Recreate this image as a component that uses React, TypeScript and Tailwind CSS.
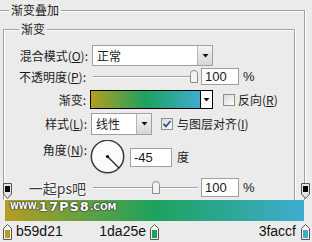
import React from "react";

function Arrow() {
  return (
    <svg width="7" height="4" viewBox="0 0 7 4">
      <polygon points="0.5,0 6.5,0 3.5,3.5" fill="#111" />
    </svg>
  );
}

function ArrowBtn() {
  return (
    <div className="w-[15px] h-full flex items-center justify-center border-l border-[#b4b4b4] bg-[linear-gradient(to_bottom,#f4f4f4,#d6d6d6)]">
      <Arrow />
    </div>
  );
}

function Thumb() {
  return (
    <svg width="8" height="13" viewBox="0 0 8 13">
      <path d="M0.5 3.5 Q0.5 0.5 4 0.5 Q7.5 0.5 7.5 3.5 V12.5 H0.5 Z" fill="#f3f3f3" stroke="#8c8c8c" />
    </svg>
  );
}

function Slider({ thumbLeft }: { thumbLeft: string }) {
  return (
    <div className="relative w-[106px] h-full">
      <div className="absolute left-[1px] right-0 top-[8px] h-[1px] bg-[#a0a0a0]" />
      <div className="absolute left-[1px] right-0 top-[9px] h-[1px] bg-white" />
      <div className={"absolute top-[2px] " + thumbLeft}>
        <Thumb />
      </div>
    </div>
  );
}

function CheckBox({ checked }: { checked?: boolean }) {
  return (
    <div className="w-[12px] h-[12px] border border-[#8e8f8f] bg-[linear-gradient(135deg,#d8d8d8,#ffffff)] flex items-center justify-center">
      {checked && (
        <svg width="10" height="10" viewBox="0 0 10 10">
          <path d="M1.5 5 L4 7.5 L8.5 2" fill="none" stroke="#34508a" strokeWidth="1.8" />
        </svg>
      )}
    </div>
  );
}

function OpacityStop() {
  return (
    <svg width="9" height="16" viewBox="0 0 9 16">
      <path d="M0.5 0.5 H8.5 V11 L4.5 15.5 L0.5 11 Z" fill="#e4e4e4" stroke="#555" />
      <rect x="2" y="3" width="5" height="6" fill="#000" />
    </svg>
  );
}

function ColorStop({ color }: { color: string }) {
  return (
    <svg width="9" height="16" viewBox="0 0 9 16">
      <path d="M4.5 0.5 L8.5 4.5 V15.5 H0.5 V4.5 Z" fill="#f6f6f6" stroke="#555" />
      <rect x="2" y="6" width="5" height="8" fill={color} />
    </svg>
  );
}

export default function App() {
  const num = "font-['Liberation_Sans',Arial,sans-serif]";
  return (
    <div className="relative w-[312px] h-[242px] overflow-hidden bg-[#ebebeb] text-[12px] leading-[14px] text-[#1c1c1c] font-['Noto_Sans_CJK_SC','Noto_Sans',sans-serif]">
      {/* outer group */}
      <div className="relative mt-[10px] ml-[-2px] w-[307px] h-[190px] border-t border-l border-r border-[#a0a0a0] shadow-[inset_1px_1px_0_#fff,1px_0_0_#fff]">
        <div className="absolute top-[-8px] left-[10px] px-[2px] bg-[#ebebeb] leading-[14px]">渐变叠加</div>
        {/* inner group */}
        <div className="relative mt-[18px] ml-[4px] w-[292px] h-[171px] border-t border-l border-r border-[#a0a0a0] shadow-[inset_1px_1px_0_#fff,1px_0_0_#fff] pt-[15px] flex flex-col">
          <div className="absolute top-[-8px] left-[15px] px-[2px] bg-[#ebebeb] leading-[14px]">渐变</div>

          {/* row 1 */}
          <div className="flex h-[21px] items-center">
            <div className="w-[84px] text-right">混合模式(<span className="underline">O</span>):</div>
            <div className="ml-[4px] w-[121px] h-[21px] flex border border-[#9ca1a6] bg-white">
              <div className="flex-1 pl-[4px] flex items-center">正常</div>
              <ArrowBtn />
            </div>
          </div>

          {/* row 2 */}
          <div className="flex h-[17px] mt-[2px] items-center">
            <div className="w-[84px] text-right pr-[2px]">不透明度(<span className="underline">P</span>):</div>
            <div className="ml-[4px] h-full">
              <Slider thumbLeft="left-[98px]" />
            </div>
            <div className={"ml-[3px] w-[38px] h-[17px] border border-[#a0a0a0] bg-white pl-[3px] flex items-center text-[13px] " + num}>100</div>
            <div className={"ml-[4px] text-[13px] " + num}>%</div>
          </div>

          {/* row 3 */}
          <div className="flex h-[19px] mt-[5px] items-center">
            <div className="w-[84px] text-right pr-[2px]">渐变:</div>
            <div className="ml-[2px] w-[123px] h-[19px] flex">
              <div className="flex-1 border border-black bg-[linear-gradient(to_right,#b59d21,#1da25e_50%,#3faccf)]" />
              <div className="w-[12px] border border-l-0 border-black bg-white flex items-center justify-center">
                <Arrow />
              </div>
            </div>
            <div className="ml-[10px]">
              <CheckBox />
            </div>
            <div className="ml-[3px]">反向(<span className="underline">R</span>)</div>
          </div>

          {/* row 4 */}
          <div className="flex h-[22px] mt-[4px] items-center">
            <div className="w-[84px] text-right pr-[1px]">样式(<span className="underline">L</span>):</div>
            <div className="ml-[3px] w-[61px] h-[22px] flex border border-[#9ca1a6] bg-white">
              <div className="flex-1 pl-[4px] flex items-center">线性</div>
              <ArrowBtn />
            </div>
            <div className="ml-[9px]">
              <CheckBox checked />
            </div>
            <div className="ml-[4px]">与图层对齐(<span className="underline">I</span>)</div>
          </div>

          {/* row 5 */}
          <div className="flex h-[34px] mt-[5px] items-start">
            <div className="w-[84px] text-right pr-[1px] pt-[3px]">角度(<span className="underline">N</span>):</div>
            <div className="ml-[2px]">
              <svg width="36" height="34" viewBox="0 0 36 34">
                <circle cx="17.5" cy="16.5" r="16.2" fill="#fbfbfb" stroke="#3a3a3a" strokeWidth="1.5" />
                <line x1="17.5" y1="16.5" x2="29" y2="28" stroke="#222" strokeWidth="1.2" />
                <circle cx="17.5" cy="16.5" r="1.6" fill="#000" />
              </svg>
            </div>
            <div className={"ml-[4px] mt-[8px] w-[42px] h-[19px] border border-[#a0a0a0] bg-white pl-[3px] flex items-center text-[13px] " + num}>-45</div>
            <div className="ml-[5px] mt-[10px]">度</div>
          </div>

          {/* row 6 */}
          <div className="flex h-[21px] mt-[3px] items-center">
            <div className="w-[84px] text-right pr-[2px] text-[14px] leading-[16px] text-[#3a3a3a] [text-shadow:0_0_2px_#fff,0_0_2px_#fff,0_0_1px_#fff]">一起ps吧</div>
            <div className="ml-[4px] h-[17px]">
              <Slider thumbLeft="left-[60px]" />
            </div>
            <div className={"ml-[3px] w-[38px] h-[19px] border border-[#a0a0a0] bg-white pl-[3px] flex items-center text-[13px] " + num}>100</div>
            <div className={"ml-[4px] text-[13px] " + num}>%</div>
          </div>
        </div>
      </div>

      {/* opacity stops (overlay) */}
      <div className="absolute top-[183px] left-[3px]">
        <OpacityStop />
      </div>
      <div className="absolute top-[183px] left-[301px]">
        <OpacityStop />
      </div>

      {/* gradient bar */}
      <div className="relative ml-[5px] w-[299px] h-[21px] bg-[linear-gradient(to_right,#b59d21,#1da25e_50%,#3faccf)]">
        <div className="absolute left-[5px] top-[0px] flex items-end font-['DejaVu_Sans',sans-serif] font-bold text-white [text-shadow:0_0_1px_#222,0_0_1px_#222,0_0_2px_#333]">
          <span className="text-[8px] leading-[12px]">WWW.</span>
          <span className="text-[13px] leading-[13px] tracking-[1px]">17PS8</span>
          <span className="text-[9px] leading-[12px]">.COM</span>
        </div>
      </div>

      {/* color stops row */}
      <div className={"flex mt-[2px] h-[18px] text-[14px] leading-[16px] text-[#111] " + num}>
        <div className="ml-[3px] mt-[1px]">
          <ColorStop color="#b59d21" />
        </div>
        <div className="ml-[4px] w-[70px]">b59d21</div>
        <div className="w-[60px] text-right">1da25e</div>
        <div className="ml-[4px] mt-[1px]">
          <ColorStop color="#1da25e" />
        </div>
        <div className="w-[137px] text-right">3faccf</div>
        <div className="ml-[5px] mt-[1px]">
          <ColorStop color="#3faccf" />
        </div>
      </div>
    </div>
  );
}
